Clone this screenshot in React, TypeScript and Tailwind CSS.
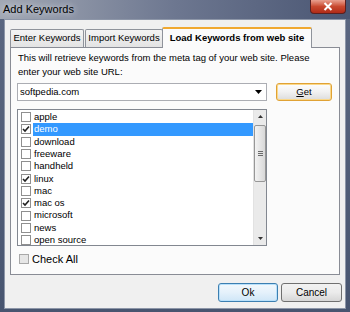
import React from "react";

const items: { label: string; checked: boolean; selected?: boolean }[] = [
  { label: "apple", checked: false },
  { label: "demo", checked: true, selected: true },
  { label: "download", checked: false },
  { label: "freeware", checked: false },
  { label: "handheld", checked: false },
  { label: "linux", checked: true },
  { label: "mac", checked: false },
  { label: "mac os", checked: true },
  { label: "microsoft", checked: false },
  { label: "news", checked: false },
  { label: "open source", checked: false },
];

function CheckBox({ checked, disabled }: { checked: boolean; disabled?: boolean }) {
  return (
    <div
      className={
        "w-[10px] h-[10px] border flex items-center justify-center shrink-0 " +
        (disabled ? "border-[#a8a8a8] bg-[#e6e6e6]" : "border-[#8f8f8f] bg-white")
      }
    >
      {checked && (
        <svg width="8" height="8" viewBox="0 0 8 8">
          <path d="M1 4 L3 6 L7 1.5" stroke="#222" strokeWidth="1.6" fill="none" />
        </svg>
      )}
    </div>
  );
}

export default function App() {
  return (
    <div
      className="w-[350px] h-[312px] flex flex-col bg-gradient-to-b from-[#5b6781] to-[#485570] overflow-hidden"
      style={{ fontFamily: '"Liberation Sans", Arial, sans-serif' }}
    >
      {/* Title bar */}
      <div className="h-[19px] flex items-start justify-between bg-gradient-to-r from-[#a2a8b4] via-[#6d7790] to-[#4a5673] relative">
        <div className="pl-[3px] pt-[3px] text-[11px] leading-[12px] text-black [text-shadow:0_0_6px_#e8ecf2]">
          Add Keywords
        </div>
        <div className="mr-[4px] w-[36px] h-[14px] rounded-b-[4px] border border-t-0 border-[#5a2020] bg-gradient-to-b from-[#e8a090] via-[#c8482e] to-[#b02a18] flex items-center justify-center">
          <svg width="10" height="9" viewBox="0 0 10 9">
            <path d="M1.5 1 L8.5 8 M8.5 1 L1.5 8" stroke="white" strokeWidth="2" />
          </svg>
        </div>
      </div>
      {/* Body */}
      <div className="flex-1 flex px-[4px] pb-[3px]">
        <div className="flex-1 bg-[#f0f0f0] border border-[#8d96a8] flex flex-col text-[9.5px] text-black">
          {/* tabs */}
          <div className="flex items-end pl-[5px] pt-[6px] h-[27px]">
            <div className="h-[18px] w-[74px] border border-b-0 border-[#8f939b] bg-gradient-to-b from-[#f4f4f4] to-[#e3e3e3] flex items-center justify-center rounded-t-[2px]">
              Enter Keywords
            </div>
            <div className="h-[18px] w-[78px] ml-[1px] border border-b-0 border-[#8f939b] bg-gradient-to-b from-[#f4f4f4] to-[#e3e3e3] flex items-center justify-center rounded-t-[2px]">
              Import Keywords
            </div>
            <div className="h-[21px] w-[150px] -ml-[1px] mb-[-1px] relative z-10 border border-b-0 border-[#8f939b] border-t-[2px] border-t-[#f0a830] bg-[#fbfbfb] flex items-center justify-center font-bold rounded-t-[2px]">
              Load Keywords from web site
            </div>
          </div>
          {/* panel */}
          <div className="ml-[5px] w-[330px] h-[228px] border border-[#898c95] bg-[#fbfbfb] flex flex-col">
            <div className="pl-[7px] pt-[3px] leading-[14px]">
              <div>This will retrieve keywords from the meta tag of your web site. Please</div>
              <div>enter your web site URL:</div>
            </div>
            <div className="flex items-center pl-[6px] mt-[4px]">
              <div className="w-[250px] h-[18px] border border-[#abadb3] bg-white flex items-center justify-between pl-[2px] pr-[4px]">
                <span>softpedia.com</span>
                <svg width="7" height="4" viewBox="0 0 7 4">
                  <path d="M0 0 H7 L3.5 4 Z" fill="#000" />
                </svg>
              </div>
              <div className="ml-[9px] w-[56px] h-[18px] rounded-[3px] border border-[#e0a235] bg-gradient-to-b from-[#fdfdfd] via-[#f1f1f1] to-[#dcdcdc] flex items-center justify-center shadow-[inset_0_0_0_1px_#fbd889]">
                <span><span className="underline">G</span>et</span>
              </div>
            </div>
            <div className="ml-[6px] mt-[8px] w-[250px] h-[137px] border border-[#828790] bg-white flex">
              <div className="flex-1 flex flex-col pt-[1px]">
                {items.map((it) => (
                  <div key={it.label} className="h-[12.3px] flex items-center">
                    <div className="pl-[3px] pr-[2px]">
                      <CheckBox checked={it.checked} />
                    </div>
                    <div
                      className={
                        "flex-1 h-full flex items-center pl-[1px] text-[9.5px] " +
                        (it.selected ? "bg-[#3399ff] text-white" : "")
                      }
                    >
                      {it.label}
                    </div>
                  </div>
                ))}
              </div>
              {/* scrollbar */}
              <div className="w-[13px] bg-[#eaeaea] border-l border-[#e2e2e2] flex flex-col items-center">
                <div className="h-[13px] w-full flex items-center justify-center">
                  <svg width="5" height="3" viewBox="0 0 5 3">
                    <path d="M0 3 L2.5 0 L5 3 Z" fill="#333" />
                  </svg>
                </div>
                <div className="mt-[2px] w-[12px] h-[57px] rounded-[2px] border border-[#979797] bg-gradient-to-r from-[#f3f3f3] to-[#d8d8d8] flex flex-col items-center justify-center gap-[1px]">
                  <div className="w-[5px] h-[1px] bg-[#6a6a6a]" />
                  <div className="w-[5px] h-[1px] bg-[#6a6a6a]" />
                  <div className="w-[5px] h-[1px] bg-[#6a6a6a]" />
                </div>
                <div className="flex-1" />
                <div className="h-[13px] w-full flex items-center justify-center">
                  <svg width="5" height="3" viewBox="0 0 5 3">
                    <path d="M0 0 L5 0 L2.5 3 Z" fill="#333" />
                  </svg>
                </div>
              </div>
            </div>
            <div className="ml-[8px] mt-[5px] flex items-center gap-[3px] text-[11px]">
              <CheckBox checked={false} disabled />
              <span>Check All</span>
            </div>
          </div>
          {/* bottom buttons */}
          <div className="flex justify-end pr-[3px] mt-[8px] gap-[3px] text-[10px]">
            <div className="w-[60px] h-[19px] rounded-[3px] border border-[#3c7fb1] bg-gradient-to-b from-[#f2f8fc] via-[#e5f1fb] to-[#cfe6f7] flex items-center justify-center shadow-[inset_0_0_0_1px_#b8e0fb]">
              Ok
            </div>
            <div className="w-[61px] h-[19px] rounded-[3px] border border-[#707070] bg-gradient-to-b from-[#f2f2f2] via-[#ebebeb] to-[#d6d6d6] flex items-center justify-center">
              Cancel
            </div>
          </div>
        </div>
      </div>
    </div>
  );
}
